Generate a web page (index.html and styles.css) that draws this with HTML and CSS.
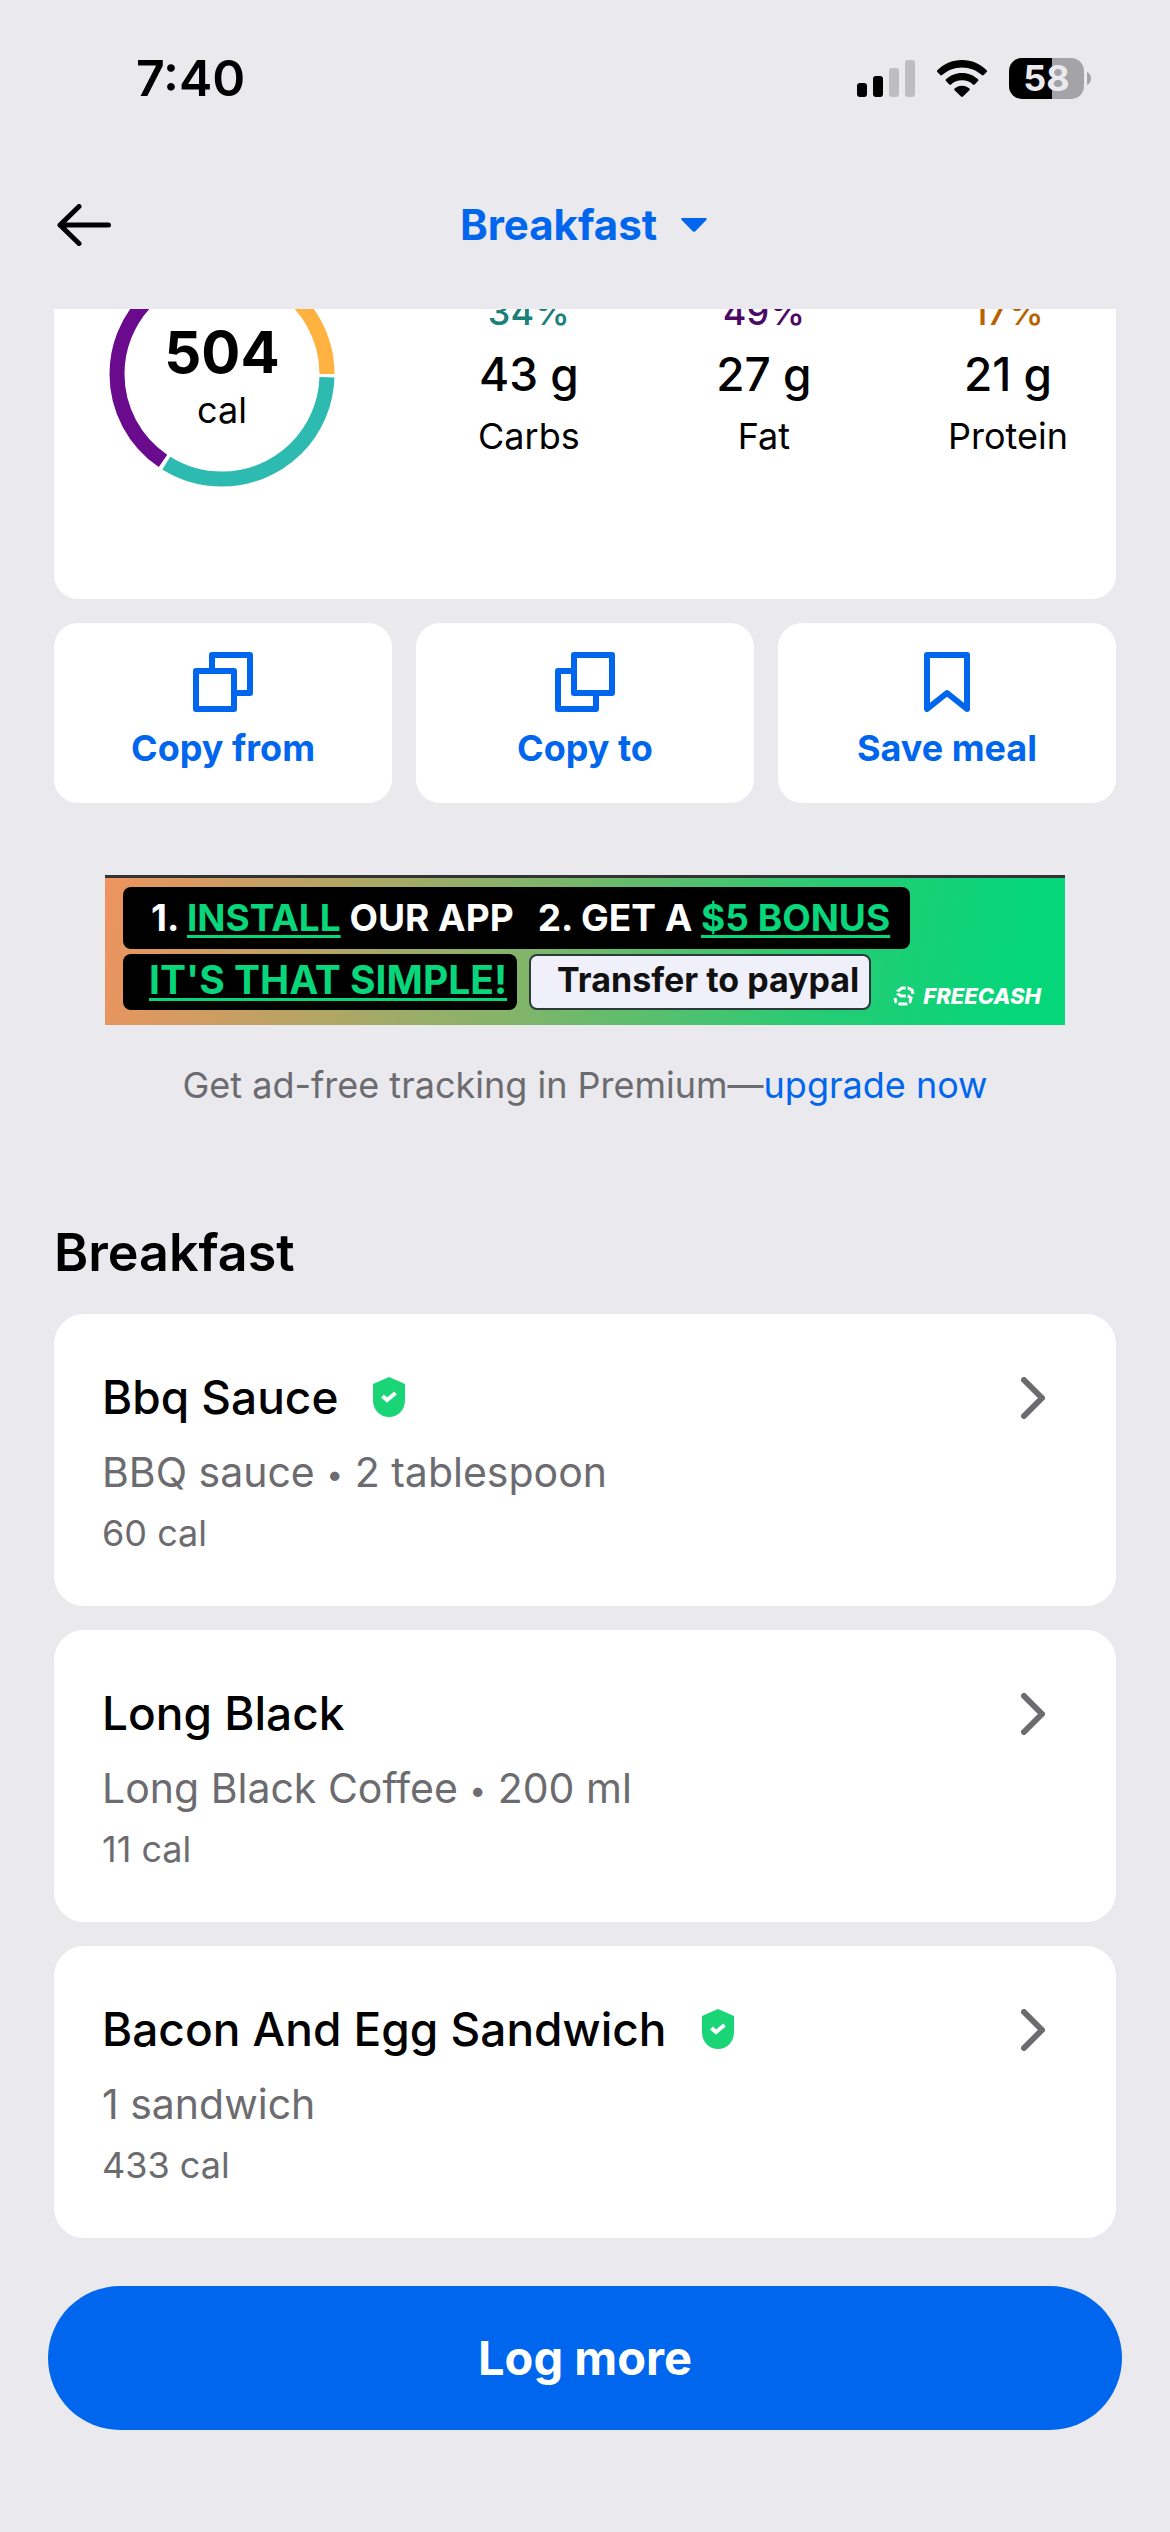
FILE: index.html
```html
<!DOCTYPE html>
<html lang="en">
<head>
<meta charset="utf-8">
<meta name="viewport" content="width=device-width, initial-scale=1">
<title>Breakfast</title>
<link rel="stylesheet" href="styles.css">
</head>
<body>
<div class="status">
  <span class="status-time">7:40</span>
  <div class="status-icons">
    <svg class="signal" viewBox="0 0 58 37" width="58" height="37" aria-hidden="true">
      <rect x="0" y="23" width="10" height="14" rx="3"/>
      <rect x="16" y="16" width="10" height="21" rx="3"/>
      <rect class="dim" x="32" y="8" width="10" height="29" rx="3"/>
      <rect class="dim" x="48" y="0" width="10" height="37" rx="3"/>
    </svg>
    <svg class="wifi" viewBox="0 0 50 37" width="50" height="37" aria-hidden="true">
      <path d="M25 0C34.800 0 43.500 3.800 49.600 10.200C50.200 10.800 50.200 11.400 49.700 12L46.700 15C46.100 15.600 45.500 15.500 44.900 15C39.600 10.200 32.600 7.400 25 7.400C17.400 7.400 10.400 10.200 5.100 15C4.500 15.500 3.900 15.600 3.300 15L.3 12C-.2 11.400-.2 10.800.4 10.200C6.500 3.800 15.200 0 25 0Z"/>
      <path d="M25 13C31.300 13 36.900 15.400 41 19.300C41.600 19.900 41.600 20.500 41 21.100L37.700 24.400C37.100 25 36.500 25 35.900 24.400C33 21.800 29.200 20.300 25 20.300C20.800 20.300 17 21.800 14.100 24.400C13.500 25 12.900 25 12.300 24.400L9 21.100C8.400 20.500 8.400 19.900 9 19.300C13.100 15.400 18.700 13 25 13Z"/>
      <path d="M25 25.800C28 25.800 30.600 26.900 32.400 28.600C32.900 29.100 32.900 29.700 32.400 30.200L26 36.500C25.300 37.100 24.700 37.100 24 36.500L17.600 30.200C17.100 29.700 17.100 29.100 17.600 28.600C19.400 26.900 22 25.800 25 25.800Z"/>
    </svg>
    <div class="battery">
      <span class="battery-level">58</span>
      <svg viewBox="0 0 4 13" width="4" height="13" aria-hidden="true"><path d="M0 0C2.500 1 4 3.500 4 6.500S2.500 12 0 13Z"/></svg>
    </div>
  </div>
</div>

<header class="nav">
  <button class="nav-back" type="button" aria-label="Back">
    <svg viewBox="0 0 54 42" width="54" height="42" aria-hidden="true"><path d="M22 2.500L3 21L22 39.500M3 21H51.500"/></svg>
  </button>
  <button class="nav-title" type="button">
    <span>Breakfast</span>
    <svg viewBox="0 0 26 14" width="26" height="14" aria-hidden="true"><path d="M1.500 0H24.500C25.800 0 26.200 1 25.300 1.900L14.300 13.200C13.500 14 12.500 14 11.700 13.200L.7 1.900C-.2 1 .2 0 1.500 0Z"/></svg>
  </button>
</header>

<main class="content">
  <section class="summary" aria-label="Meal summary">
    <div class="summary-body">
      <div class="ring">
        <svg viewBox="0 0 226 226" width="226" height="226" aria-hidden="true">
          <circle class="arc carbs-arc" cx="113" cy="113" r="105" pathLength="100" stroke-dasharray="33.400 66.600" stroke-dashoffset="-0.500"/>
          <circle class="arc fat-arc" cx="113" cy="113" r="105" pathLength="100" stroke-dasharray="48.500 51.500" stroke-dashoffset="-34.500"/>
          <circle class="arc protein-arc" cx="113" cy="113" r="105" pathLength="100" stroke-dasharray="16.500 83.500" stroke-dashoffset="-83.500"/>
        </svg>
        <div class="ring-label">
          <strong class="ring-value">504</strong>
          <span class="ring-unit">cal</span>
        </div>
      </div>
      <div class="macros">
        <div class="macro"><span class="macro-share carbs">34%</span><span class="macro-amount">43 g</span><span class="macro-name">Carbs</span></div>
        <div class="macro"><span class="macro-share fat">49%</span><span class="macro-amount">27 g</span><span class="macro-name">Fat</span></div>
        <div class="macro"><span class="macro-share protein">17%</span><span class="macro-amount">21 g</span><span class="macro-name">Protein</span></div>
      </div>
    </div>
  </section>

  <div class="actions">
    <button class="action" type="button">
      <svg viewBox="0 0 60 60" width="60" height="60" aria-hidden="true"><path d="M19 19V3H57V41H41M3 19H41V57H3Z"/></svg>
      <span>Copy from</span>
    </button>
    <button class="action" type="button">
      <svg viewBox="0 0 60 60" width="60" height="60" aria-hidden="true"><path d="M19 19H3V57H41V41M19 3H57V41H19Z"/></svg>
      <span>Copy to</span>
    </button>
    <button class="action" type="button">
      <svg viewBox="0 0 60 60" width="60" height="60" aria-hidden="true"><path d="M10 3H50V57L30 41L10 57Z"/></svg>
      <span>Save meal</span>
    </button>
  </div>

  <a class="ad" href="#install">
    <span class="ad-row">
      <span class="ad-box ad-steps"><span>1. <u>INSTALL</u> OUR APP</span><span>2. GET A <u>$5 BONUS</u></span></span>
    </span>
    <span class="ad-row">
      <span class="ad-box ad-simple"><u>IT'S THAT SIMPLE!</u></span>
      <span class="ad-box ad-transfer">Transfer to paypal</span>
      <span class="ad-brand">
        <svg viewBox="0 0 22 20" width="22" height="20" aria-hidden="true"><path d="M20 8L19 4L15 2H9L5 5V8L8 10H15L18 12L17 16L13 18H7L3 16L2 12" stroke-dasharray="9 2"/></svg>
        <span>FREECASH</span>
      </span>
    </span>
  </a>
  <p class="upsell">Get ad-free tracking in Premium—<a href="#premium">upgrade now</a></p>

  <h1 class="heading">Breakfast</h1>
  <ul class="foods">
    <li>
      <a class="food" href="#bbq-sauce">
        <span class="food-text">
          <span class="food-name">Bbq Sauce
            <svg class="shield" viewBox="0 0 32 40" width="32" height="40" role="img" aria-label="Verified"><path class="shield-body" d="M16 0L32 7V23C32 33 25 40 16 40S0 33 0 23V7Z"/><path class="shield-tick" d="M9.500 19L14 23L22.500 16"/></svg>
          </span>
          <span class="food-detail">BBQ sauce <span class="dot">•</span> 2 tablespoon</span>
          <span class="food-cal">60 cal</span>
        </span>
        <svg class="chevron" viewBox="0 0 24 42" width="24" height="42" aria-hidden="true"><path d="M3 3L21 21L3 39"/></svg>
      </a>
    </li>
    <li>
      <a class="food" href="#long-black">
        <span class="food-text">
          <span class="food-name">Long Black</span>
          <span class="food-detail">Long Black Coffee <span class="dot">•</span> 200 ml</span>
          <span class="food-cal">11 cal</span>
        </span>
        <svg class="chevron" viewBox="0 0 24 42" width="24" height="42" aria-hidden="true"><path d="M3 3L21 21L3 39"/></svg>
      </a>
    </li>
    <li>
      <a class="food" href="#bacon-egg-sandwich">
        <span class="food-text">
          <span class="food-name">Bacon And Egg Sandwich
            <svg class="shield" viewBox="0 0 32 40" width="32" height="40" role="img" aria-label="Verified"><path class="shield-body" d="M16 0L32 7V23C32 33 25 40 16 40S0 33 0 23V7Z"/><path class="shield-tick" d="M9.500 19L14 23L22.500 16"/></svg>
          </span>
          <span class="food-detail">1 sandwich</span>
          <span class="food-cal">433 cal</span>
        </span>
        <svg class="chevron" viewBox="0 0 24 42" width="24" height="42" aria-hidden="true"><path d="M3 3L21 21L3 39"/></svg>
      </a>
    </li>
  </ul>
</main>

<footer class="footer">
  <button class="log" type="button">Log more</button>
</footer>
</body>
</html>
```
FILE: styles.css
```css
:root {
  --page: #eae9ee;
  --blue: #0066ee;
  --grey: #6c6c70;
}

* { box-sizing: border-box; }

body {
  margin: 0;
  min-height: 100vh;
  background: var(--page);
  color: #000;
  font-family: Inter, "Liberation Sans", sans-serif;
  font-size: 36px;
  line-height: 48px;
}

button {
  padding: 0;
  border: 0;
  background: none;
  color: inherit;
  font: inherit;
}

a { color: inherit; text-decoration: none; }
svg { display: block; flex: none; }

/* Status bar */
.status {
  display: flex;
  align-items: center;
  justify-content: space-between;
  height: 156px;
  padding: 0 79px 0 136px;
}
.status-time { font-size: 50px; font-weight: 600; }
.status-icons { display: flex; align-items: center; gap: 22px; }
.signal .dim { fill: #bebdc1; }
.battery { display: flex; align-items: center; gap: 3px; fill: #a4a3a8; }
.battery-level {
  width: 75px;
  border-radius: 13px;
  background: linear-gradient(90deg, #000 58%, #a4a3a8 58%);
  color: var(--page);
  font-weight: 700;
  line-height: 41px;
  text-align: center;
}

/* Navigation */
.nav {
  display: grid;
  grid-template-columns: 1fr auto 1fr;
  align-items: center;
  padding: 39px 60px 54px 57px;
}
.nav-back { justify-self: start; }
.nav-back svg { fill: none; stroke: #000; stroke-width: 5; stroke-linecap: round; stroke-linejoin: round; }
.nav-title {
  display: flex;
  align-items: center;
  gap: 24px;
  color: var(--blue);
  fill: var(--blue);
  font-size: 42px;
  font-weight: 700;
  line-height: 60px;
}

.content { padding: 0 54px; }

/* Meal summary, partly scrolled under the navigation */
.summary {
  overflow: hidden;
  border-radius: 0 0 24px 24px;
  background: #fff;
}
.summary-body {
  display: flex;
  align-items: center;
  justify-content: space-between;
  margin-top: -48px;
  padding: 0 48px 112px 55px;
}
.ring { display: grid; place-items: center; }
.ring > * { grid-area: 1 / 1; }
.arc { fill: none; stroke-width: 15; }
.carbs-arc { stroke: #2dbab1; }
.fat-arc { stroke: #6a0b8e; }
.protein-arc { stroke: #ffb23f; }
.ring-label { display: flex; flex-direction: column; align-items: center; }
.ring-value { font-size: 58px; font-weight: 700; line-height: 72px; }
.ring-unit { line-height: 44px; }
.macros {
  display: flex;
  justify-content: space-between;
  flex: 0 1 590px;
}
.macro { display: flex; flex-direction: column; align-items: center; gap: 8px; }
.macro-share { font-weight: 500; }
.macro-amount { font-size: 46px; font-weight: 500; line-height: 60px; }
.carbs { color: #19807a; }
.fat { color: #4b0a66; }
.protein { color: #b86200; }

/* Actions */
.actions {
  display: grid;
  grid-template-columns: repeat(3, 1fr);
  gap: 24px;
  margin-top: 24px;
}
.action {
  display: flex;
  flex-direction: column;
  align-items: center;
  gap: 12px;
  padding: 29px 0 31px;
  border-radius: 24px;
  background: #fff;
  color: var(--blue);
  font-weight: 700;
}
.action svg { fill: none; stroke: var(--blue); stroke-width: 6; stroke-linejoin: round; }

/* Advertisement */
.ad {
  display: flex;
  flex-direction: column;
  gap: 5px;
  max-width: 960px;
  height: 150px;
  margin: 72px auto 0;
  padding: 9px 18px 0;
  border-top: 3px solid #333;
  background: linear-gradient(100deg, #ee935f 0%, #7fb56a 45%, #25cc74 75%, #05d67a 95%);
  color: #fff;
  font-size: 37px;
  font-weight: 700;
  white-space: nowrap;
}
.ad u {
  color: #08d67b;
  text-decoration-thickness: 3px;
  text-underline-offset: 4px;
  text-decoration-skip-ink: none;
}
.ad-row { display: flex; align-items: flex-start; }
.ad-box { border-radius: 8px; background: #000; }
.ad-steps { display: flex; gap: 24px; padding: 0 20px 0 28px; line-height: 62px; }
.ad-simple { padding: 0 10px 4px 26px; font-size: 39px; line-height: 52px; }
.ad-transfer {
  margin-left: 12px;
  padding: 0 10px 4px 26px;
  border: 2px solid #2b3b3a;
  background: #eff0fa;
  color: #111;
  font-size: 34px;
  line-height: 48px;
}
.ad-brand {
  display: flex;
  align-items: center;
  gap: 8px;
  margin-left: 22px;
  padding-top: 30px;
  font-size: 22px;
  font-style: italic;
  font-weight: 800;
  line-height: 24px;
}
.ad-brand svg { fill: none; stroke: #fff; stroke-width: 3; }

.upsell { margin: 36px 0 0; color: var(--grey); text-align: center; }
.upsell a { color: var(--blue); }

/* Foods */
.heading { margin: 110px 0 27px; font-size: 52px; font-weight: 600; line-height: 68px; }
.foods {
  display: flex;
  flex-direction: column;
  gap: 24px;
  margin: 0;
  padding: 0;
  list-style: none;
}
.food {
  display: flex;
  align-items: flex-start;
  justify-content: space-between;
  padding: 52px 71px 46px 48px;
  border-radius: 30px;
  background: #fff;
}
.food-text { display: flex; flex-direction: column; color: var(--grey); }
.food-name {
  display: flex;
  align-items: center;
  gap: 35px;
  color: #000;
  font-size: 46px;
  font-weight: 500;
  line-height: 62px;
}
.food-detail { margin-top: 10px; font-size: 41px; line-height: 68px; }
.dot { font-size: 30px; vertical-align: 2px; line-height: 1; }
.food-cal { line-height: 54px; }
.shield-body { fill: #1ad576; }
.shield-tick { fill: none; stroke: #fff; stroke-width: 4; }
.chevron { margin-top: 11px; fill: none; stroke: var(--grey); stroke-width: 6; stroke-linecap: round; stroke-linejoin: round; }

/* Footer */
.footer { padding: 48px 48px 102px; }
.log {
  display: block;
  width: 100%;
  border-radius: 72px;
  background: var(--blue);
  color: #fff;
  font-size: 47px;
  font-weight: 700;
  line-height: 144px;
}
```
